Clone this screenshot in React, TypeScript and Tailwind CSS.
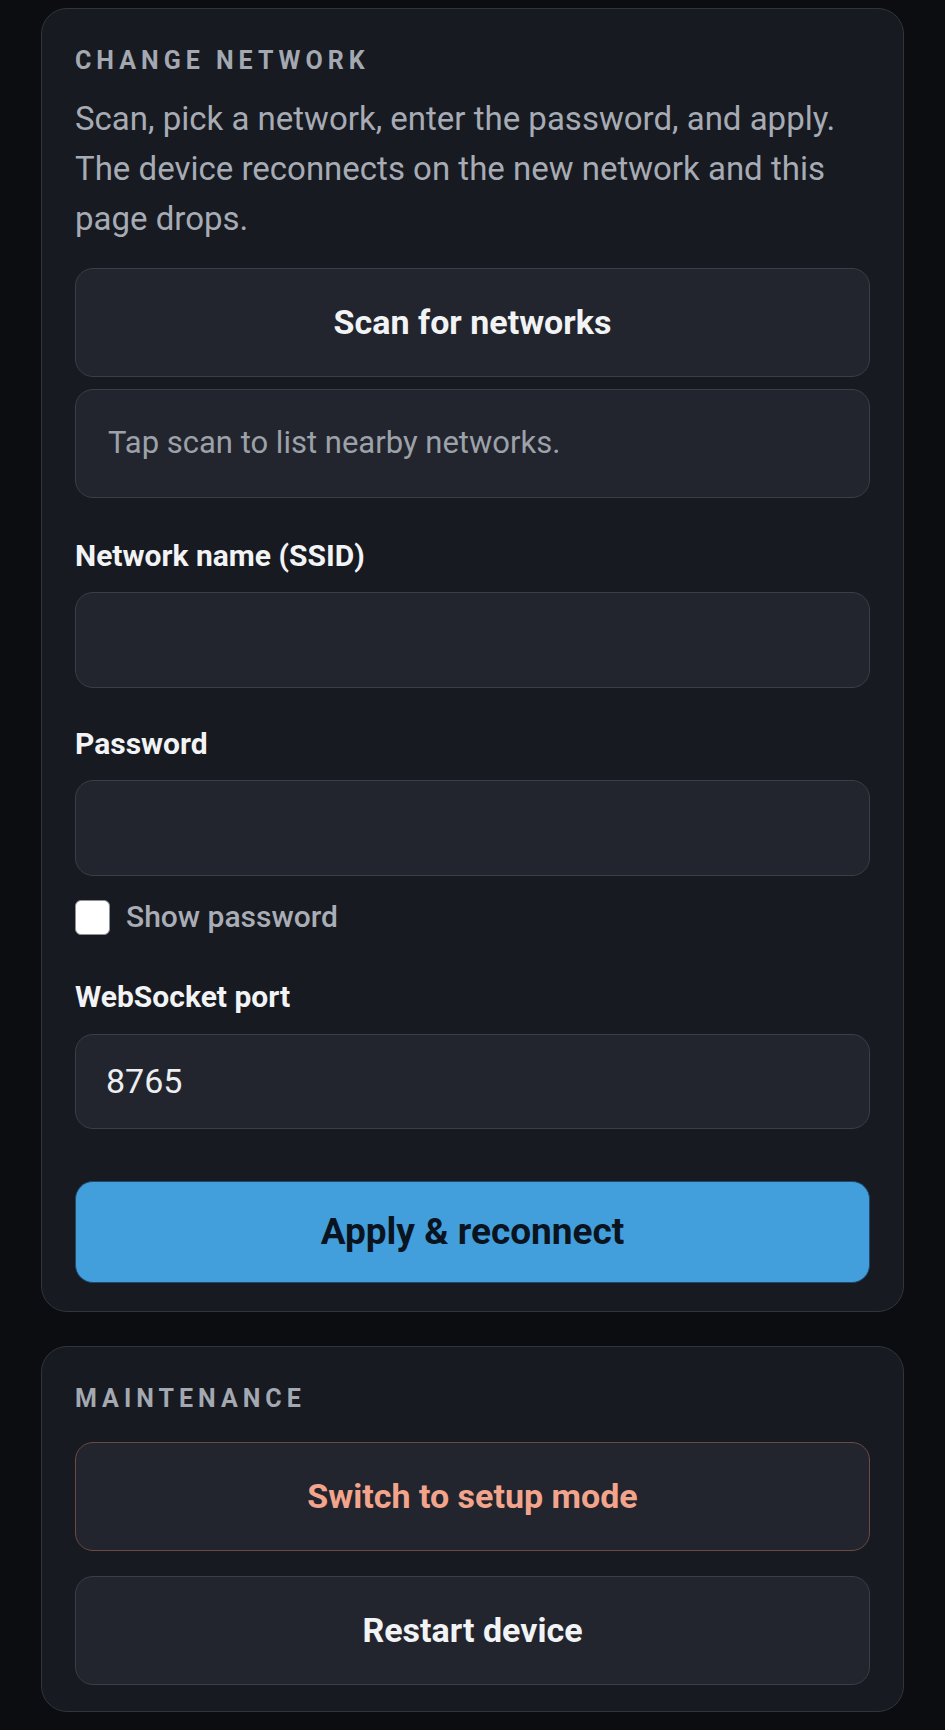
import React from "react";

export default function App() {
  const font = { fontFamily: "Roboto, 'Noto Sans', sans-serif" };
  return (
    <div
      className="min-h-[1730px] w-full bg-[#0b0d11] px-[41px] pt-[8px] pb-[19px]"
      style={font}
    >
      {/* Change network card */}
      <section className="rounded-[26px] border border-[#30343c] bg-[#171a21] px-[33px] pt-[33px] pb-[28px]">
        <h2 className="text-[25px] leading-[38px] font-bold tracking-[0.2em] text-[#a3a8b1]">
          CHANGE NETWORK
        </h2>
        <p className="mt-[14px] text-[33px] leading-[50px] text-[#a6abb4]">
          Scan, pick a network, enter the password, and apply. The device
          reconnects on the new network and this page drops.
        </p>
        <button className="mt-[24px] flex h-[109px] w-full items-center justify-center rounded-[18px] border border-[#3a3e46] bg-[#22252d] text-[34px] font-bold text-[#f2f3f5]">
          Scan for networks
        </button>
        <div className="mt-[12px] flex h-[109px] w-full items-center rounded-[18px] border border-[#3a3e46] bg-[#22252d] px-[32px] text-[31px] text-[#9ca1aa]">
          Tap scan to list nearby networks.
        </div>

        <label className="mt-[40px] block text-[30px] leading-[36px] font-bold text-[#f2f3f5]">
          Network name (SSID)
        </label>
        <div className="mt-[18px] h-[96px] w-full rounded-[18px] border border-[#3a3e46] bg-[#22252d]" />

        <label className="mt-[38px] block text-[30px] leading-[36px] font-bold text-[#f2f3f5]">
          Password
        </label>
        <div className="mt-[18px] h-[96px] w-full rounded-[18px] border border-[#3a3e46] bg-[#22252d]" />

        <div className="mt-[23px] flex items-center gap-[16px]">
          <span className="block h-[35px] w-[35px] rounded-[6px] border border-[#8d9199] bg-white" />
          <span className="text-[30px] leading-[36px] font-medium text-[#a9adb6]">
            Show password
          </span>
        </div>

        <label className="mt-[44px] block text-[30px] leading-[36px] font-bold text-[#f2f3f5]">
          WebSocket port
        </label>
        <div className="mt-[19px] flex h-[95px] w-full items-center rounded-[18px] border border-[#3a3e46] bg-[#22252d] px-[30px] text-[34px] text-[#eceef1]">
          8765
        </div>

        <button className="mt-[52px] flex h-[102px] w-full items-center justify-center rounded-[18px] border border-[#1d4a6e] bg-[#439fdc] text-[37px] font-bold text-[#0a1420]">
          Apply &amp; reconnect
        </button>
      </section>

      {/* Maintenance card */}
      <section className="mt-[34px] rounded-[26px] border border-[#30343c] bg-[#171a21] px-[33px] pt-[33px] pb-[26px]">
        <h2 className="text-[25px] leading-[38px] font-bold tracking-[0.2em] text-[#a3a8b1]">
          MAINTENANCE
        </h2>
        <button className="mt-[24px] flex h-[109px] w-full items-center justify-center rounded-[18px] border border-[#6e4843] bg-[#22252d] text-[34px] font-bold text-[#f3a48c]">
          Switch to setup mode
        </button>
        <button className="mt-[25px] flex h-[109px] w-full items-center justify-center rounded-[18px] border border-[#3a3e46] bg-[#22252d] text-[34px] font-bold text-[#f2f3f5]">
          Restart device
        </button>
      </section>
    </div>
  );
}
